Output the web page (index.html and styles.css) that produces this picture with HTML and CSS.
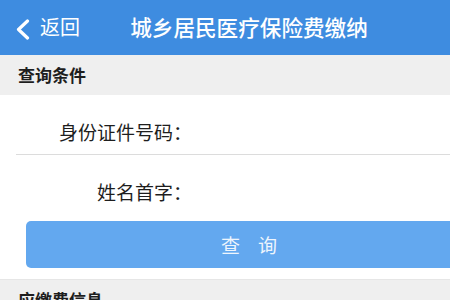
FILE: index.html
```html
<!DOCTYPE html>
<html lang="zh-CN">

<head>
    <meta charset="UTF-8">
    <meta name="viewport" content="width=device-width, initial-scale=1.0">
    <title>城乡居民医疗保险费缴纳</title>
    <link rel="stylesheet" href="styles.css">
</head>

<body>
    <div class="page">
        <!-- 顶部导航 -->
        <header class="nav-bar">
            <a class="back" href="javascript:;">
                <svg width="15" height="21" viewBox="0 0 15 21">
                    <path d="M12.5 2 L3.5 10.5 L12.5 19" fill="none" stroke="#fff" stroke-width="3.2" stroke-linecap="round" stroke-linejoin="round" />
                </svg>
                <span>返回</span>
            </a>
            <h1 class="nav-title">城乡居民医疗保险费缴纳</h1>
        </header>

        <div class="section-title">查询条件</div>

        <!-- 查询表单 -->
        <form class="query-form" onsubmit="return false">
            <div class="form-row">
                <label for="idno">身份证件号码：</label>
                <input id="idno" type="text">
            </div>
            <div class="form-row">
                <label for="initial">姓名首字：</label>
                <input id="initial" type="text">
            </div>
            <button class="query-btn" type="submit">查询</button>
        </form>

        <div class="section-title">应缴费信息</div>
    </div>
</body>

</html>
```

FILE: styles.css
```css
html,
body {
    margin: 0;
    overflow: hidden;
    background-color: #fff;
}

body {
    font-family: "Noto Sans CJK SC", "Noto Sans", sans-serif;
    color: #222;
}

.page {
    width: 498px;
}

/* 顶部导航 */
.nav-bar {
    height: 55px;
    background-color: #3e8ce0;
    display: grid;
    grid-template-columns: 1fr auto 1fr;
    align-items: center;
    padding-bottom: 2px;
    box-sizing: border-box;
}

.back {
    display: flex;
    align-items: center;
    color: #fff;
    text-decoration: none;
    font-size: 20px;
    padding-left: 15px;
}

.back svg {
    margin-top: 6px;
    margin-right: 10px;
}

.back span {
    line-height: 24px;
}

.nav-title {
    margin: 0;
    font-size: 21.6px;
    font-weight: 500;
    color: #fff;
    line-height: 26px;
}

/* 分组标题 */
.section-title {
    height: 40px;
    line-height: 40px;
    background-color: #efefef;
    padding-left: 18px;
    font-size: 17px;
    font-weight: bold;
    color: #1e1e1e;
}

/* 表单 */
.query-form {
    margin: 0;
    padding-bottom: 11px;
    border-bottom: 1px solid #e6e6e6;
}

.form-row {
    display: flex;
    align-items: center;
    margin-left: 16px;
    padding-top: 25px;
    height: 24px;
    padding-bottom: 10px;
    font-size: 19px;
    line-height: 24px;
}

.form-row + .form-row {
    border-top: 1px solid #dcdcdc;
    padding-bottom: 17px;
}

.form-row label {
    width: 176px;
    text-align: right;
    color: #1e1e1e;
}

.form-row input {
    flex: 1;
    border: none;
    outline: none;
    background: transparent;
    font-size: 19px;
}

.query-btn {
    display: block;
    width: calc(100% - 52px);
    height: 47px;
    margin: 0 26px;
    border: none;
    border-radius: 5px;
    background-color: #63a8ef;
    color: #eef5fd;
    font-family: inherit;
    font-size: 19px;
    letter-spacing: 18px;
    padding: 0 0 0 18px;
}
```
